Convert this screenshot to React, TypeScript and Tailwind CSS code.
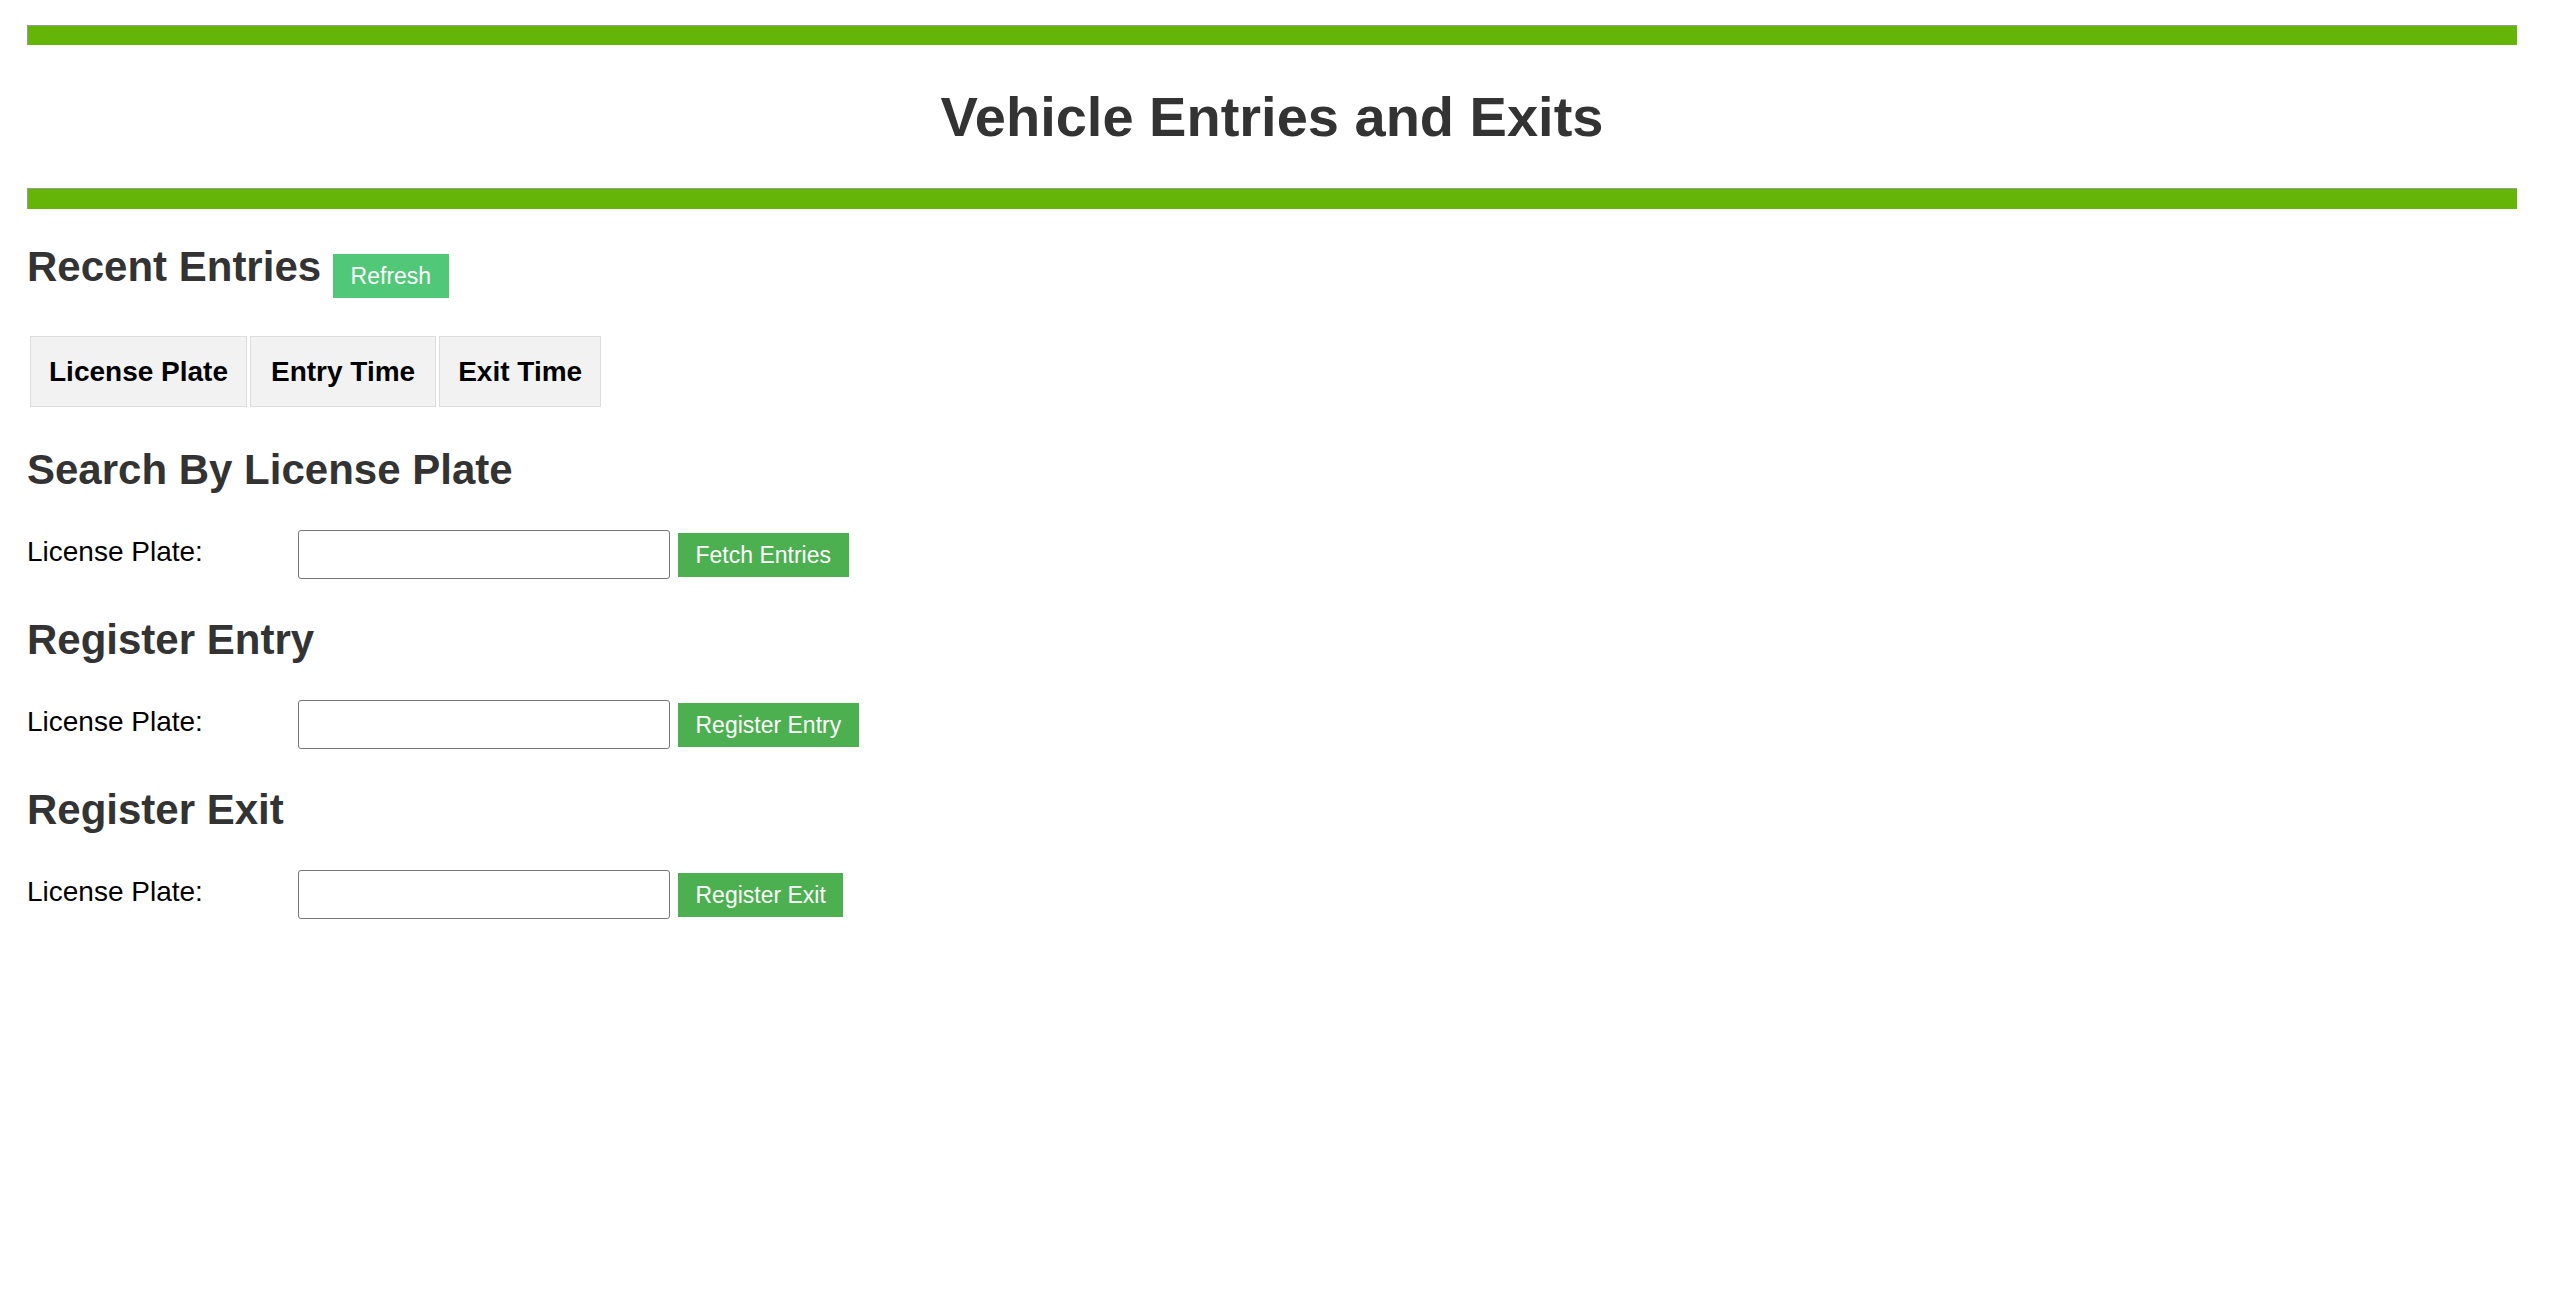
import { ReactNode } from 'react';

const font = "font-['Liberation_Sans',Arial,sans-serif]";

function GreenBar({ className }: { className?: string }) {
  return <div className={`h-[20px] bg-[#65b509] border-t border-l border-[#999] ${className ?? ''}`} />;
}

function ActionButton({ children, color = 'bg-[#4caf50]', className }: { children: ReactNode; color?: string; className?: string }) {
  return (
    <button
      type="button"
      className={`${color} ${className ?? ''} h-[44px] px-[17.5px] flex items-center text-[23px] leading-[27px] text-white shrink-0`}
    >
      {children}
    </button>
  );
}

function PlateForm({ title, action, className }: { title: string; action: string; className: string }) {
  return (
    <section className={className}>
      <h2 className="text-[42px] leading-[48px] font-bold text-[#333]">{title}</h2>
      <div className="mt-[36px] flex items-start">
        <label className="w-[271px] mt-[6px] text-[28px] leading-[32px] text-black shrink-0">License Plate:</label>
        <input
          type="text"
          className="w-[372px] h-[49px] border border-[#767676] rounded-[3px] px-[4px] text-[23px] outline-none shrink-0"
        />
        <ActionButton className="ml-[8px] mt-[3px]">{action}</ActionButton>
      </div>
    </section>
  );
}

const headers = [
  { label: 'License Plate', pad: 'px-[18px]' },
  { label: 'Entry Time', pad: 'px-[20px]' },
  { label: 'Exit Time', pad: 'px-[18px]' },
];

export default function App() {
  return (
    <div className={`${font} min-h-[1296px] w-full bg-white`}>
      <div className="ml-[27px] mr-[34px] pt-[25px]">
        {/* header */}
        <GreenBar />
        <h1 className="mt-[40px] text-center text-[56px] leading-[64px] font-bold text-[#333]">Vehicle Entries and Exits</h1>
        <GreenBar className="mt-[39px] h-[21px]" />

        {/* recent entries */}
        <div className="mt-[34px] flex items-start gap-[12px]">
          <h2 className="text-[42px] leading-[48px] font-bold text-[#333]">Recent Entries</h2>
          <ActionButton color="bg-[#50c878]" className="mt-[11px]">Refresh</ActionButton>
        </div>
        <table className="mt-[35px] border-separate border-spacing-[3.5px]">
          <thead>
            <tr>
              {headers.map((h) => (
                <th
                  key={h.label}
                  className={`border border-[#ddd] bg-[#f2f2f2] ${h.pad} py-[18px] text-[28px] leading-[33px] font-bold text-black text-left`}
                >
                  {h.label}
                </th>
              ))}
            </tr>
          </thead>
          <tbody />
        </table>

        <PlateForm className="mt-[36px]" title="Search By License Plate" action="Fetch Entries" />
        <PlateForm className="mt-[37px]" title="Register Entry" action="Register Entry" />
        <PlateForm className="mt-[37px]" title="Register Exit" action="Register Exit" />
      </div>
    </div>
  );
}
